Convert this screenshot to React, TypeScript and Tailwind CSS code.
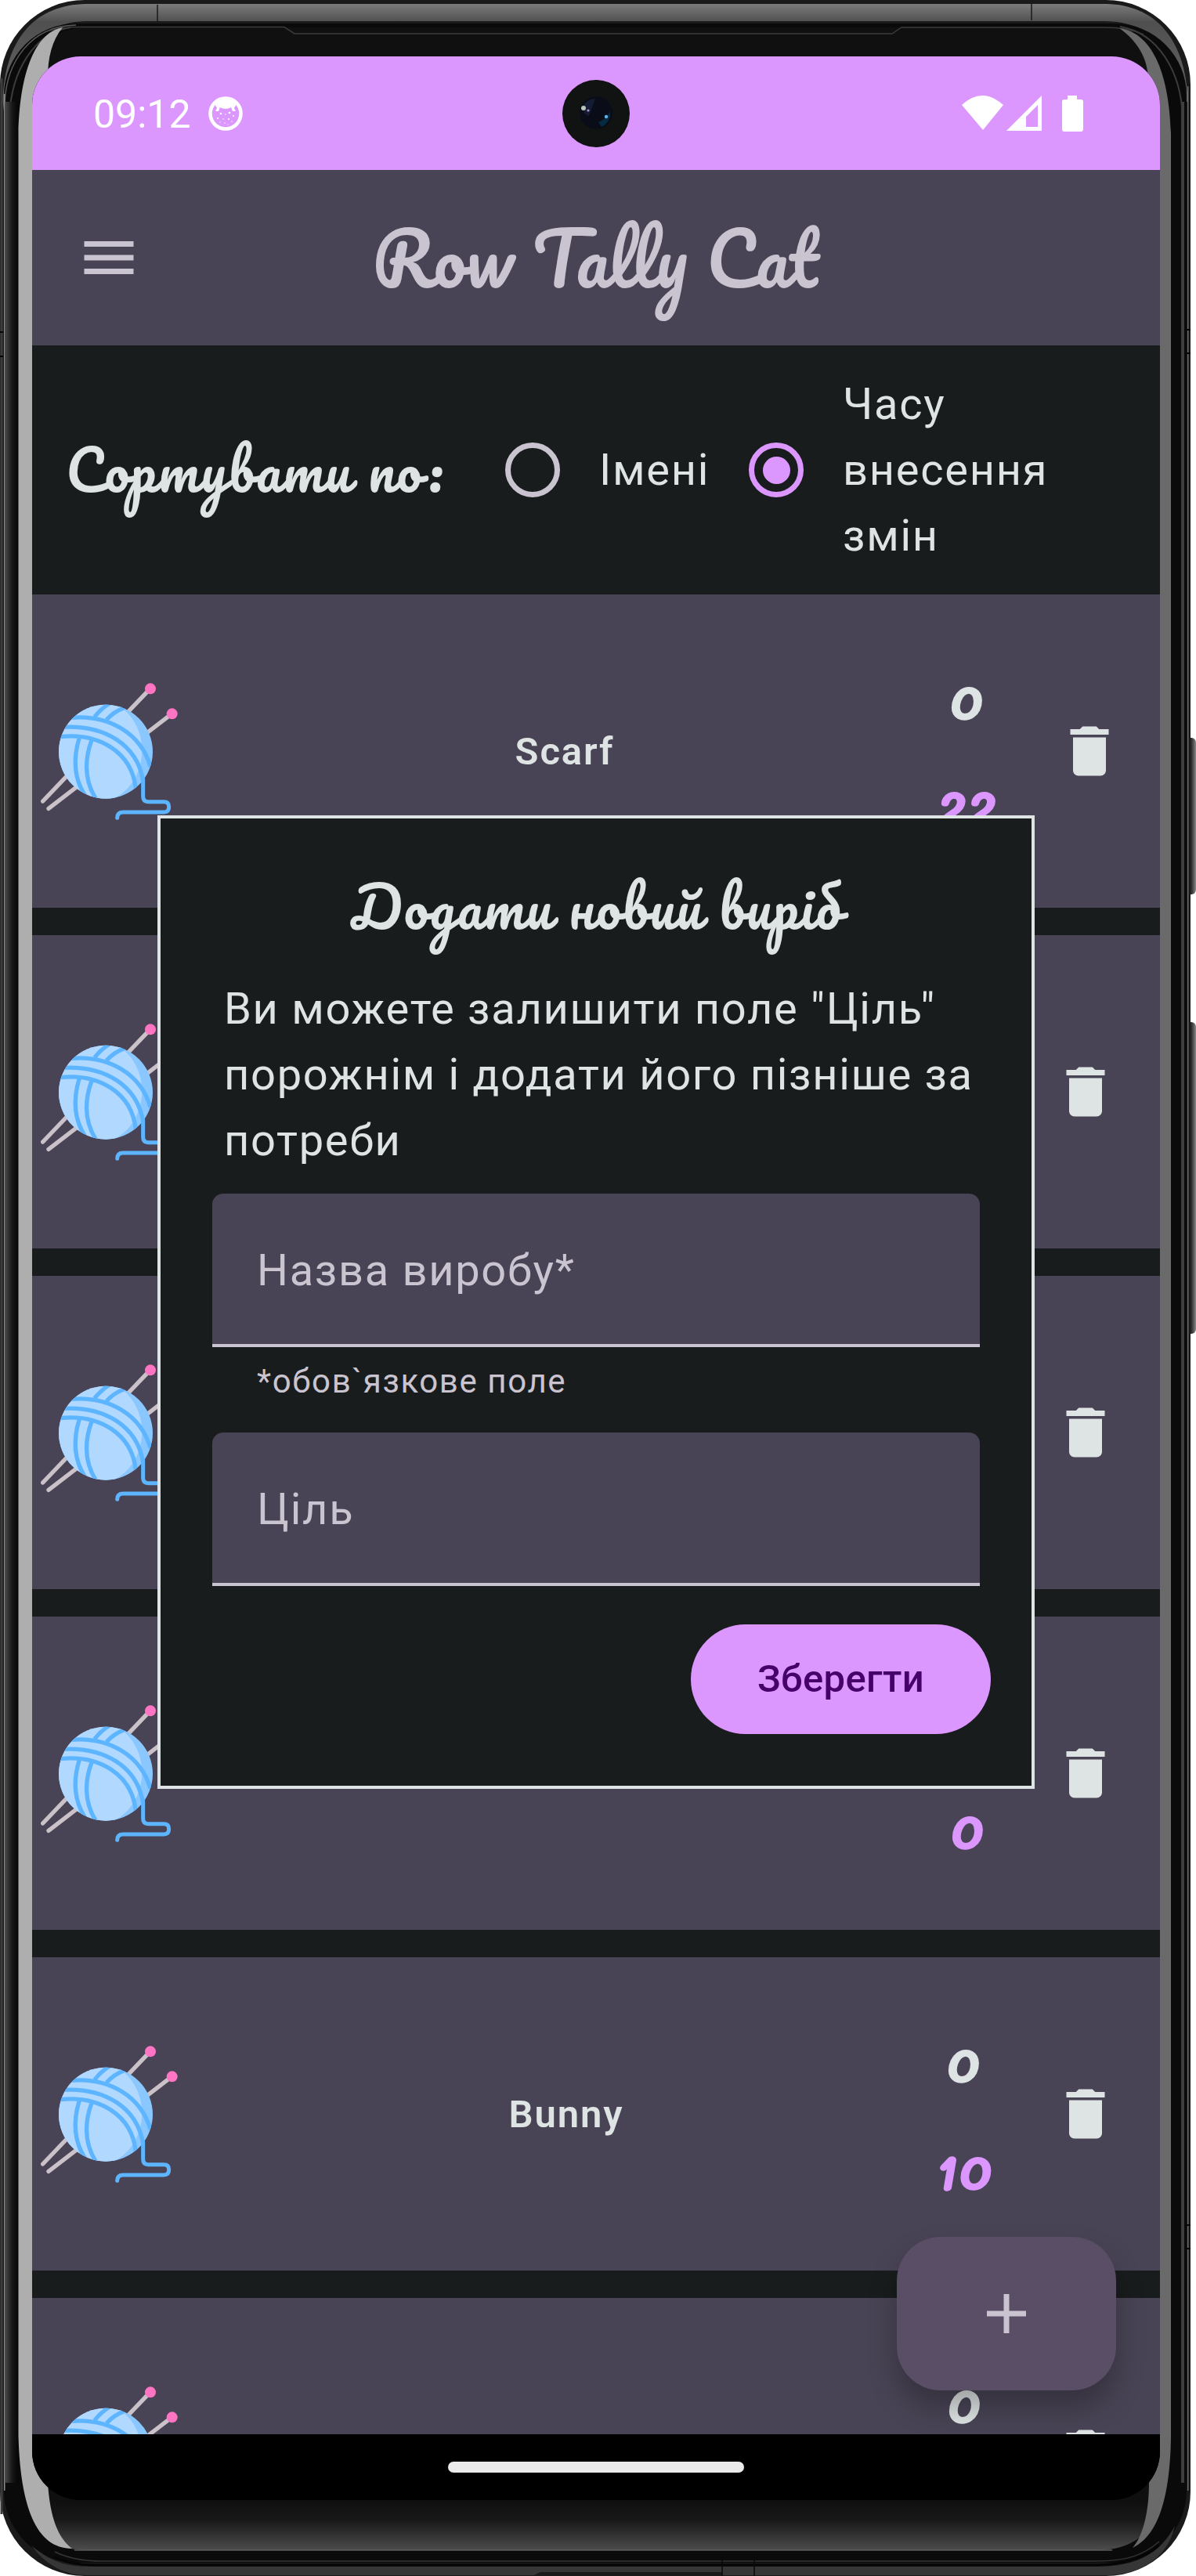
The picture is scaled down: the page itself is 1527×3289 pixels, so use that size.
import React from 'react';

type Item = {
  name: string;
  count: string;
  goal: string;
  nameCls: string;
  binCls: string;
};

const items: Item[] = [
  { name: 'Scarf', count: '0', goal: '22', nameCls: 'w-[958px] pl-[30px]', binCls: 'ml-16' },
  { name: '', count: '', goal: '', nameCls: 'w-[954px] pl-[38px]', binCls: 'ml-[63px]' },
  { name: '', count: '', goal: '', nameCls: 'w-[954px] pl-[38px]', binCls: 'ml-[63px]' },
  { name: '', count: '', goal: '0', nameCls: 'w-[959px] pl-[38px]', binCls: 'ml-[58px]' },
  { name: 'Bunny', count: '0', goal: '10', nameCls: 'w-[954px] pl-[38px]', binCls: 'ml-[63px]' },
  { name: '', count: '0', goal: '', nameCls: 'w-[955px] pl-[38px]', binCls: 'ml-[62px]' },
];

function Yarn() {
  return (
    <svg viewBox="66 95 525 525" className="h-[175px] w-[175px] shrink-0">
      <defs>
        <clipPath id="ball">
          <circle cx="315" cy="358" r="180" />
        </clipPath>
      </defs>
      <g stroke="#cac1c9" strokeWidth="16" strokeLinecap="round">
        <path d="M74 548 L485 117" />
        <path d="M96 576 L568 213" />
      </g>
      <circle cx="486" cy="117" r="21" fill="#ff75c3" />
      <circle cx="569" cy="213" r="21" fill="#ff75c3" />
      <circle cx="315" cy="358" r="180" fill="#8ac7ff" />
      <g clipPath="url(#ball)">
        <ellipse cx="270" cy="354" rx="184" ry="202" fill="#b1d8ff" />
        <g fill="none" stroke="#5eb5ff" strokeWidth="16">
          <path d="M180 228 C330 215 450 290 486 415" />
          <path d="M150 264 C310 255 435 330 458 470" />
          <path d="M140 301 C290 285 415 360 430 500" />
          <path d="M272 225 Q300 190 335 170" />
          <path d="M318 236 Q345 205 385 190" />
          <path d="M214 304 Q175 430 235 525" />
          <path d="M261 314 Q215 440 278 540" />
        </g>
      </g>
      <path
        d="M458 462 V530 Q458 550 478 550 H538 Q557 550 557 570 Q557 590 538 590 H382 Q359 590 359 612"
        fill="none"
        stroke="#5eb5ff"
        strokeWidth="15"
        strokeLinecap="round"
      />
    </svg>
  );
}

function Bin({ className }: { className: string }) {
  return (
    <svg viewBox="0 0 24 24" fill="#dee3e3" className={`h-[84px] w-[84px] shrink-0 ${className}`}>
      <path d="M6 19c0 1.1.9 2 2 2h8c1.1 0 2-.9 2-2V7H6v12zM19 4h-3.5l-1-1h-5l-1 1H5v2h14V4z" />
    </svg>
  );
}

function Row({ item }: { item: Item }) {
  return (
    <div className="flex h-[400px] shrink-0 items-center bg-[#494455] pl-[11px]">
      <Yarn />
      <div
        className={`shrink-0 pt-[2px] text-center text-[49px] font-semibold leading-[70px] tracking-[1.9px] text-[#dee3e3] ${item.nameCls}`}
      >
        {item.name}
      </div>
      <div className="flex w-[100px] shrink-0 flex-col items-center gap-[77px] whitespace-nowrap pt-[9px] font-[Mali,'Open_Sans',sans-serif] text-[63px] font-bold italic leading-[60px] tracking-[3px] [-webkit-text-stroke:1.5px]">
        <span className="h-[60px] text-[#dee3e3]">{item.count}</span>
        <span className="h-[60px] text-[#dc97ff]">{item.goal}</span>
      </div>
      <Bin className={item.binCls} />
    </div>
  );
}

function Radio({ checked }: { checked?: boolean }) {
  return (
    <span
      className={`flex h-[70px] w-[70px] shrink-0 items-center justify-center rounded-full border-[7px] ${
        checked ? 'border-[#dc97ff]' : 'border-[#cac4d0]'
      }`}
    >
      {checked && <span className="h-[35px] w-[35px] rounded-full bg-[#dc97ff]" />}
    </span>
  );
}

function PhoneFrame() {
  return (
    <svg viewBox="0 0 1527 3289" className="absolute inset-0 h-[3289px] w-[1527px]">
      <defs>
        <linearGradient id="topBar" x1="0" y1="0" x2="0" y2="1">
          <stop offset="0" stopColor="#7b7b7b" />
          <stop offset="0.16" stopColor="#4f4f4f" />
          <stop offset="1" stopColor="#6a6a6a" />
        </linearGradient>
        <linearGradient id="leftEdge" x1="0" y1="0" x2="1" y2="0">
          <stop offset="0" stopColor="#4a4a4a" />
          <stop offset="0.55" stopColor="#161616" />
          <stop offset="1" stopColor="#050505" />
        </linearGradient>
        <linearGradient id="rim" x1="0" y1="3192" x2="0" y2="3256" gradientUnits="userSpaceOnUse">
          <stop offset="0" stopColor="#0f0f0f" />
          <stop offset="0.4" stopColor="#181818" />
          <stop offset="1" stopColor="#4c4c4c" />
        </linearGradient>
        <linearGradient id="key" x1="0" y1="0" x2="1" y2="0">
          <stop offset="0" stopColor="#1b1b1b" />
          <stop offset="0.6" stopColor="#2a2a2a" />
          <stop offset="1" stopColor="#8a8a8a" />
        </linearGradient>
      </defs>
      <rect x="1512" y="942" width="15" height="200" rx="6" fill="url(#key)" />
      <rect x="1512" y="1305" width="15" height="398" rx="6" fill="url(#key)" />
      <rect x="0" y="0" width="1520" height="3289" rx="108" fill="#1a1a1a" />
      {/* polished metal band */}
      <path d="M3.500 130 C6 48 46 6 110 5 H1412 C1474 6 1514 48 1517 130 L1512 130 C1500 60 1470 28 1410 27 H110 C50 28 22 70 6 150 Z" fill="url(#topBar)" />
      <path d="M201 6 V29 M1317 4 V26" stroke="#1a1a1a" strokeWidth="1.5" />
      <rect x="0.5" y="100" width="3" height="3110" fill="#3c3c3c" />
      <rect x="5" y="30" width="1510" height="3242" rx="92" fill="#0a0a0a" />
      <path d="M6 132 C8 80 38 33 97 32" fill="none" stroke="#5a5a5a" strokeWidth="1.5" />
      <path d="M12 150 C14 90 44 42 90 35" fill="none" stroke="#3c3c3c" strokeWidth="2" />
      <path d="M1510 150 C1508 90 1478 42 1430 34" fill="none" stroke="#3c3c3c" strokeWidth="2" />
      <rect x="5" y="120" width="1.5" height="3060" fill="#8a8a8a" />
      <rect x="6.5" y="130" width="17" height="3040" fill="url(#leftEdge)" />
      <rect x="1508" y="130" width="4" height="3040" fill="#3e3e3e" />
      <rect x="1516" y="110" width="1.5" height="3070" fill="#6a6a6a" />
      {/* lower edge */}
      <path d="M24 3120 C26 3210 50 3256 110 3256 H1400 C1460 3256 1492 3220 1495 3120 Z" fill="url(#rim)" />
      <path d="M95 3256 H1420" stroke="#5c5c5c" strokeWidth="1.5" />
      <path d="M70 3258 C90 3268 110 3270 130 3270 H1400 C1440 3270 1460 3262 1480 3245" stroke="#343434" strokeWidth="1.5" fill="none" />
      <path d="M70 3265 Q90 3275 120 3275 H1400 Q1450 3275 1480 3250" stroke="#050505" strokeWidth="3" fill="none" />
      <path d="M40 3250 C70 3275 90 3277 120 3277 H1400 C1450 3277 1480 3262 1500 3225 C1490 3270 1450 3288 1412 3288 H110 C80 3288 56 3272 40 3250 Z" fill="#363636" />
      <path d="M680 3289 L690 3284 H922 V3289 Z" fill="#1a1a1a" />
      <path d="M922 3258 V3289 M963 3258 V3289" stroke="#0a0a0a" strokeWidth="1.5" />
      {/* glass top */}
      <path d="M24 180 C26 90 50 36 110 35 H1410 C1465 36 1492 80 1495 180 Z" fill="#101010" />
      <path d="M60 40 Q80 34.5 100 34.5 H363 L376 43 H1139 L1151 35 H1410 Q1440 35 1460 44" fill="none" stroke="#3b3b3b" strokeWidth="1.5" />
      {/* side reflections */}
      <path d="M23.500 3110 V170 C25 100 42 42 80 35 C66 52 61 74 61 100 V3170 C64 3215 74 3240 92 3254 C46 3254 26 3200 23.500 3110 Z" fill="#aeaeae" />
      <path d="M1495 3110 V170 C1493 100 1474 42 1429 36 C1452 52 1465 74 1466 100 L1467 3170 C1467 3210 1458 3240 1446 3253 C1474 3240 1494 3200 1495 3110 Z" fill="#6a6a6a" />
      <path d="M0 424 H4 M0 455 H4 M1514 421 H1520 M1514 451 H1520 M1514 2841 H1520 M1514 2871 H1520" stroke="#050505" strokeWidth="2" />
    </svg>
  );
}

function StatusBar() {
  return (
    <div className="flex h-[145px] shrink-0 items-center bg-[#dc97ff] pl-[78px] pr-[98px] text-white">
      <span className="w-[128px] whitespace-nowrap pt-[3px] text-[50px] leading-[60px]">09:12</span>
      <svg viewBox="0 0 44 44" className="ml-[19px] h-11 w-11">
        <circle cx="22" cy="22" r="19.500" fill="none" stroke="#fff" strokeWidth="4.500" />
        <path d="M8 10 Q22 -4 36 10 L33 15 L35 19 L31 19 L29 14 Q22 18 15 14 L13 19 L9 19 L11 15 Z" fill="#fff" />
        <g fill="#fff">
          <circle cx="16" cy="22" r="1.300" />
          <circle cx="27" cy="21" r="1.300" />
          <circle cx="12" cy="28" r="1" />
          <circle cx="22" cy="23" r="0.700" />
          <circle cx="19" cy="29" r="0.700" />
          <circle cx="26" cy="29" r="1.100" />
          <circle cx="32" cy="25" r="1" />
          <circle cx="21" cy="34" r="0.700" />
          <circle cx="15" cy="33" r="0.700" />
          <circle cx="30" cy="32" r="0.700" />
          <circle cx="25" cy="36" r="0.600" />
        </g>
      </svg>
      <svg viewBox="0 0 86 86" className="ml-[408px] h-[86px] w-[86px]">
        <circle cx="43" cy="43" r="43" fill="#101312" />
        <circle cx="43" cy="42" r="21" fill="#0a0d18" />
        <path d="M26 34 Q32 24 42 24 L34 46 Q26 44 26 34Z" fill="#141c34" />
        <path d="M50 60 Q62 54 61 40 Q56 50 46 54Z" fill="#062a42" />
        <circle cx="27" cy="36" r="3" fill="#b9c6bd" />
        <circle cx="33" cy="39" r="1.600" fill="#b090d0" />
        <circle cx="56" cy="47" r="2.200" fill="#5db4e8" />
      </svg>
      <svg viewBox="0 0 155 46" fill="#fff" className="ml-auto h-[46px] w-[155px]">
        <path d="M0 12 Q26 -12 53 12 L27 44 Z" />
        <path d="M102 0 V45 H57 Z M97 12 L82 27 V40 H97 Z" fillRule="evenodd" />
        <path d="M135 0 H147 V5 H152 Q155 5 155 8 V43 Q155 46 152 46 H131 Q128 46 128 43 V8 Q128 5 131 5 H135 Z" />
      </svg>
    </div>
  );
}

function Dialog() {
  return (
    <div className="absolute left-[160px] top-[969px] flex h-[1243px] w-[1120px] flex-col border-4 border-[#dee3e3] bg-[#191c1d]">
      <h2 className="mt-[51px] h-[124px] whitespace-nowrap text-center font-[Pacifico,cursive] text-[70px] leading-[124px] tracking-[1.75px] text-[#dee3e3]">
        Додати новий виріб
      </h2>
      <p className="ml-[81px] mt-[26px] w-[980px] text-[56px] leading-[84px] tracking-[1.7px] text-[#dee3e3]">
        Ви можете залишити поле "Ціль" порожнім і додати його пізніше за потреби
      </p>
      <div className="ml-[66px] mt-[26px] flex h-[196px] w-[980px] items-center rounded-t-[14px] border-b-4 border-[#cac4d0] bg-[#494455] pl-[57px] pt-1 text-[56px] leading-[84px] tracking-[1.7px] text-[#cac4d0]">
        Назва виробу*
      </div>
      <div className="ml-[66px] mt-4 h-[56px] pl-[57px] text-[42px] leading-[56px] tracking-[1.6px] text-[#cac4d0]">
        *обов`язкове поле
      </div>
      <div className="ml-[66px] mt-[37px] flex h-[196px] w-[980px] items-center rounded-t-[14px] border-b-4 border-[#cac4d0] bg-[#494455] pl-[57px] pt-1 text-[56px] leading-[84px] tracking-[1.75px] text-[#cac4d0]">
        Ціль
      </div>
      <button className="ml-[677px] mt-[49px] h-[140px] w-[383px] rounded-full bg-[#dc97ff] text-[49px] font-medium leading-[70px] tracking-[0.35px] text-[#47006a]">
        Зберегти
      </button>
    </div>
  );
}

export default function App() {
  return (
    <div className="relative h-[3289px] w-[1527px] overflow-hidden bg-white font-[Roboto,sans-serif]">
      <PhoneFrame />
      <div className="relative ml-[41px] mt-[72px] flex h-[3120px] w-[1440px] flex-col overflow-hidden rounded-[62px] bg-black">
        <StatusBar />
        <header className="flex h-[224px] shrink-0 items-center bg-[#494455] pl-[66px]">
          <svg viewBox="0 0 63 42" className="h-[42px] w-[64px]" fill="#cac4d0">
            <path d="M0 0H63V7H0Z M0 17.500H63V24.500H0Z M0 35H63V42H0Z" />
          </svg>
          <h1 className="ml-[304px] h-[160px] whitespace-nowrap font-[Pacifico,cursive] text-[91px] leading-[160px] text-[#cac4d0]">
            Row Tally Cat
          </h1>
        </header>
        <section className="flex h-[318px] shrink-0 items-center bg-[#191c1d] pl-[43px] text-[56px] leading-[84px] tracking-[1.75px] text-[#dee3e3]">
          <h2 className="w-[561px] whitespace-nowrap font-[Pacifico,cursive] text-[70px] leading-[124px] tracking-[1.85px]">
            Сортувати по:
          </h2>
          <Radio />
          <span className="ml-[50px] w-[191px]">Імені</span>
          <Radio checked />
          <span className="ml-[50px] w-[300px]">Часу внесення змін</span>
        </section>
        <main className="flex h-[2349px] shrink-0 flex-col gap-[35px] overflow-hidden bg-[#191c1d]">
          {items.map((item, i) => (
            <Row key={i} item={item} />
          ))}
        </main>
        <nav className="relative z-10 flex h-[83px] shrink-0 justify-center bg-black pt-[35px]">
          <span className="h-[14px] w-[378px] rounded-full bg-[#ebebeb]" />
        </nav>
        <button className="absolute left-[1104px] top-[2784px] flex h-[196px] w-[280px] items-center justify-center rounded-[56px] bg-[#5a4d66] shadow-[0_22px_36px_rgba(0,0,0,0.28)]">
          <svg viewBox="0 0 50 50" className="h-[50px] w-[50px]" fill="#cac4d0">
            <path d="M0 21.500H21.500V0H28.500V21.500H50V28.500H28.500V50H21.500V28.500H0Z" />
          </svg>
        </button>
        <Dialog />
      </div>
    </div>
  );
}
